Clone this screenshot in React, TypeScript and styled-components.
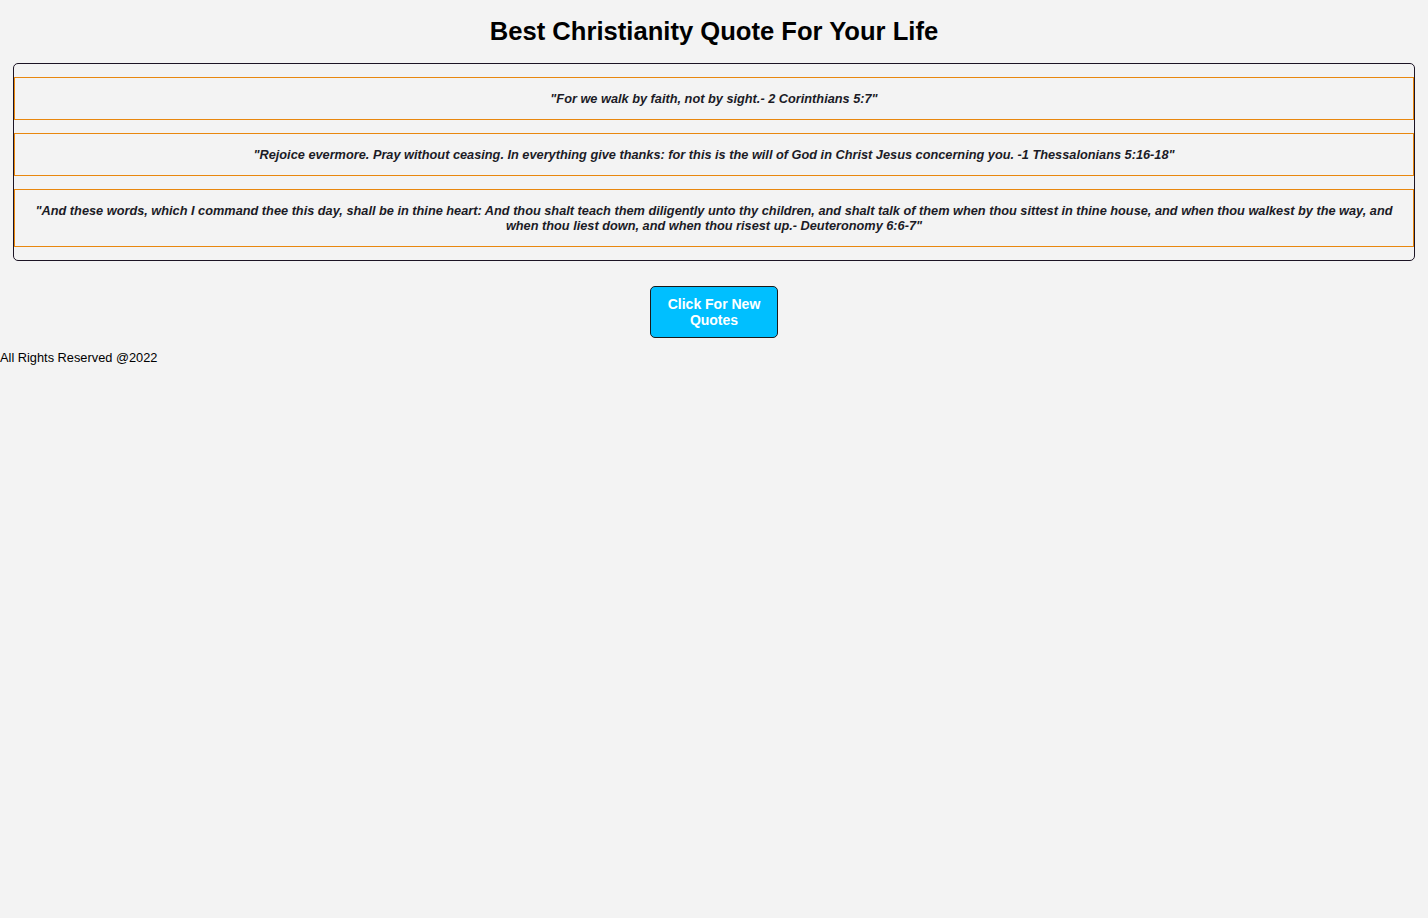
import React, { useState } from "react";
import styled, { createGlobalStyle } from "styled-components";

const Global = createGlobalStyle`
  html, body {
    margin: 0;
    padding: 0;
    background: #f3f3f3;
    font-family: "Liberation Sans", Arial, sans-serif;
    color: #000;
  }
`;

const Page = styled.div`
  display: flex;
  flex-direction: column;
`;

const Title = styled.h1`
  margin: 0 0 16px;
  padding-top: 16px;
  height: 47px;
  box-sizing: border-box;
  text-align: center;
  font-size: 25.6px;
  line-height: 30px;
  font-weight: 700;
`;

const QuoteBox = styled.div`
  margin: 0 13px;
  border: 1px solid #1c1424;
  border-radius: 5px;
  padding: 13px 0;
  display: flex;
  flex-direction: column;
  gap: 13px;
`;

const Quote = styled.p`
  margin: 0;
  border: 1px solid #e8870e;
  padding: 13px 16px;
  text-align: center;
  font-size: 12.75px;
  line-height: 15px;
  font-style: italic;
  font-weight: 700;
  color: #1b1b26;
`;

const ButtonRow = styled.div`
  display: flex;
  justify-content: center;
  padding-top: 25px;
`;

const Button = styled.button`
  width: 128px;
  height: 52px;
  background: #00bfff;
  border: 1px solid #1a1a1a;
  border-radius: 5px;
  color: #fff;
  font-family: "Liberation Sans", Arial, sans-serif;
  font-weight: 700;
  font-size: 14px;
  line-height: 16px;
  padding: 0 12px;
  cursor: pointer;
`;

const Footer = styled.footer`
  margin-top: 12px;
  font-size: 12.8px;
  line-height: 15px;
`;

const quotes = [
  '"For we walk by faith, not by sight.- 2 Corinthians 5:7"',
  '"Rejoice evermore. Pray without ceasing. In everything give thanks: for this is the will of God in Christ Jesus concerning you. -1 Thessalonians 5:16-18"',
  '"And these words, which I command thee this day, shall be in thine heart: And thou shalt teach them diligently unto thy children, and shalt talk of them when thou sittest in thine house, and when thou walkest by the way, and when thou liest down, and when thou risest up.- Deuteronomy 6:6-7"',
];

export default function App() {
  const [list] = useState(quotes);
  return (
    <Page>
      <Global />
      <Title>Best Christianity Quote For Your Life</Title>
      <QuoteBox>
        {list.map((q, i) => (
          <Quote key={i}>{q}</Quote>
        ))}
      </QuoteBox>
      <ButtonRow>
        <Button>Click For New Quotes</Button>
      </ButtonRow>
      <Footer>All Rights Reserved @2022</Footer>
    </Page>
  );
}
